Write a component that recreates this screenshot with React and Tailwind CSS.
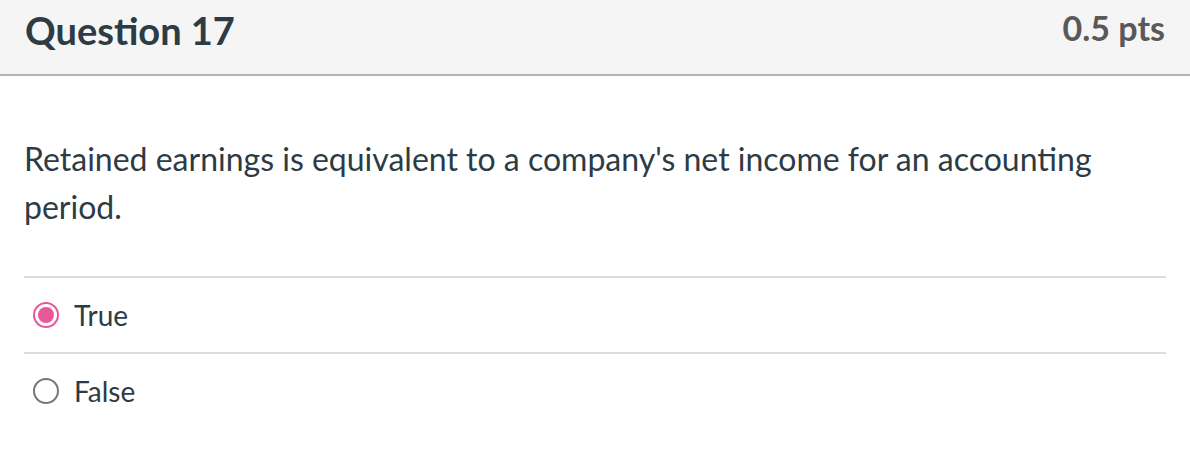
import React from "react";

const answers = [
  { id: "a1", label: "True", checked: true },
  { id: "a2", label: "False", checked: false },
];

function Radio({ checked }) {
  if (checked) {
    return (
      <span className="flex h-[26px] w-[26px] shrink-0 items-center justify-center rounded-full border-2 border-[#e8579a] bg-white">
        <span className="h-[16px] w-[16px] rounded-full bg-[#e8579a]" />
      </span>
    );
  }
  return (
    <span className="h-[26px] w-[26px] shrink-0 rounded-full border-2 border-[#777777] bg-white" />
  );
}

export default function App() {
  return (
    <div className="min-h-[452px] w-[1190px] bg-white text-[#2d3b45] font-['Lato',sans-serif]">
      <header className="flex h-[76px] items-start justify-between border-b-2 border-[#b4b4b4] bg-[#f5f5f5] px-[25px] pt-[11px]">
        <h2 className="text-[38px] font-bold leading-none">Question 17</h2>
        <div className="text-[34px] font-bold leading-none text-[#595959]">0.5 pts</div>
      </header>

      <div className="px-[24px]">
        <p className="pt-[59px] pb-[45px] text-[32px] leading-[48px]">
          Retained earnings is equivalent to a company's net income for an accounting period.
        </p>

        <div>
          {answers.map((a) => (
            <label
              key={a.id}
              className="flex h-[76px] items-center gap-[15px] border-t-2 border-[#dddddd] pl-[9px]"
            >
              <Radio checked={a.checked} />
              <span className="text-[28px]">{a.label}</span>
            </label>
          ))}
        </div>
      </div>
    </div>
  );
}
